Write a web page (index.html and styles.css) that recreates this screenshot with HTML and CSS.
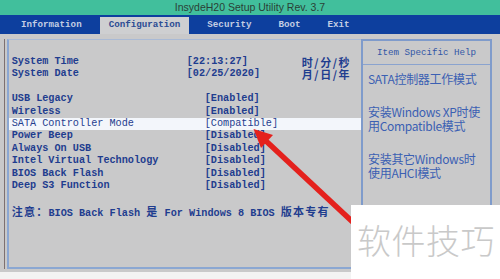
FILE: index.html
```html
<!DOCTYPE html>
<html lang="zh-CN">
<head>
    <meta charset="UTF-8">
    <title>InsydeH20 Setup Utility</title>
    <link rel="stylesheet" href="styles.css">
</head>
<body>
    <div class="screen">
        <div class="titlebar">InsydeH20 Setup Utility Rev. 3.7</div>
        <div class="tabs">
            <span class="tab">Information</span>
            <span class="tab active">Configuration</span>
            <span class="tab">Security</span>
            <span class="tab">Boot</span>
            <span class="tab">Exit</span>
        </div>
        <div class="content">
            <div class="frame">
                <div class="main">
                    <div class="row time"><span>System Time</span><span>[22:13:27]</span><span class="cjk unit">时/分/秒</span></div>
                    <div class="row time"><span>System Date</span><span>[02/25/2020]</span><span class="cjk unit">月/日/年</span></div>
                    <div class="blank"></div>
                    <div class="row"><span>USB Legacy</span><span>[Enabled]</span></div>
                    <div class="row"><span>Wireless</span><span>[Enabled]</span></div>
                    <div class="row selected"><span>SATA Controller Mode</span><span>[Compatible]</span></div>
                    <div class="row"><span>Power Beep</span><span>[Disabled]</span></div>
                    <div class="row"><span>Always On USB</span><span>[Disabled]</span></div>
                    <div class="row"><span>Intel Virtual Technology</span><span>[Disabled]</span></div>
                    <div class="row"><span>BIOS Back Flash</span><span>[Disabled]</span></div>
                    <div class="row"><span>Deep S3 Function</span><span>[Disabled]</span></div>
                    <div class="blank"></div>
                    <div class="row note"><span class="cjk">注意：</span>BIOS Back Flash <span class="cjk">是</span> For Windows 8 BIOS <span class="cjk">版本专有</span></div>
                </div>
                <div class="help">
                    <div class="help-title">Item Specific Help</div>
                    <div class="help-body">
                        <p>SATA控制器工作模式</p>
                        <p>安装Windows XP时使<br>用Compatible模式</p>
                        <p>安装其它Windows时<br>使用AHCI模式</p>
                    </div>
                </div>
            </div>
        </div>
    </div>

    <svg class="arrow" width="500" height="279" viewBox="0 0 500 279">
        <line x1="266" y1="141" x2="372" y2="240" stroke="#e4211d" stroke-width="5.5"/>
        <polygon points="253.5,129 273,135 261,148" fill="#e4211d"/>
    </svg>

    <div class="watermark">软件技巧</div>
</body>
</html>
```

FILE: styles.css
```css
body {
    margin: 0;
    width: 500px;
    height: 279px;
    overflow: hidden;
    background: #f3f3f3;
    position: relative;
    font-family: "Liberation Mono", monospace;
}

.screen {
    width: 500px;
}

.titlebar {
    height: 15px;
    line-height: 15px;
    background: #41bf9c;
    color: #2b3f36;
    text-align: center;
    font-family: "Liberation Sans", Arial, sans-serif;
    font-size: 10.5px;
}

.tabs {
    height: 19px;
    background: #0d3f9e;
    display: flex;
    align-items: flex-end;
    gap: 9px;
    padding-left: 12px;
}

.tab {
    height: 17px;
    line-height: 15px;
    padding: 0 9px;
    color: #c3cde3;
    font-weight: bold;
    font-size: 9.2px;
}

.tab.active {
    background: #cecfd1;
    color: #2b4b93;
}

.content {
    height: 230px;
    background: #c9c9ca;
    padding: 5px 8px 3px 4px;
}

.frame {
    display: flex;
    height: 100%;
    border-left: 1px solid #7d7070;
    padding-left: 2px;
}

.main {
    flex: 1;
    border-left: 2px solid #8ba7d2;
    border-top: 1px solid #a9bad6;
    border-bottom: 2px solid #8ba7d2;
    padding-top: 16px;
    color: #1f3d8f;
    font-weight: bold;
    font-size: 10.2px;
}

.row {
    display: grid;
    grid-template-columns: 193px 1fr;
    height: 12.4px;
    line-height: 12.4px;
    padding-left: 2.7px;
    white-space: pre;
}

.row.time {
    grid-template-columns: 175px 115px 1fr;
}

.row.selected {
    background: #f3f6fb;
    font-weight: normal;
}

.row.note {
    display: block;
}

.blank {
    height: 12.4px;
}

.cjk {
    font-family: "Noto Sans CJK SC", sans-serif;
    font-size: 11px;
    line-height: 12.4px;
    letter-spacing: 1.24px;
}

.unit {
    letter-spacing: 1.6px;
}

.help {
    width: 127px;
    border: 2px solid #7f9bcb;
    border-bottom: none;
    color: #3b60b3;
}

.help-title {
    height: 23px;
    line-height: 23px;
    border-bottom: 1px solid #8aa3cf;
    text-align: center;
    font-size: 9.2px;
    color: #3357a6;
}

.help-body {
    padding: 7px 0 0 5px;
    font-family: "Noto Sans CJK SC", sans-serif;
    font-size: 12px;
    letter-spacing: -0.3px;
}

.help-body p {
    margin: 0 0 18px;
    line-height: 14.5px;
}

.arrow {
    position: absolute;
    left: 0;
    top: 0;
}

.watermark {
    position: absolute;
    left: 351px;
    top: 205px;
    width: 149px;
    height: 74px;
    background: #ffffff;
    color: #c9c9c9;
    font-family: "Noto Sans CJK SC", sans-serif;
    font-weight: 300;
    font-size: 34px;
    line-height: 70px;
    padding-left: 6px;
    box-sizing: border-box;
    letter-spacing: 0.5px;
}
```
